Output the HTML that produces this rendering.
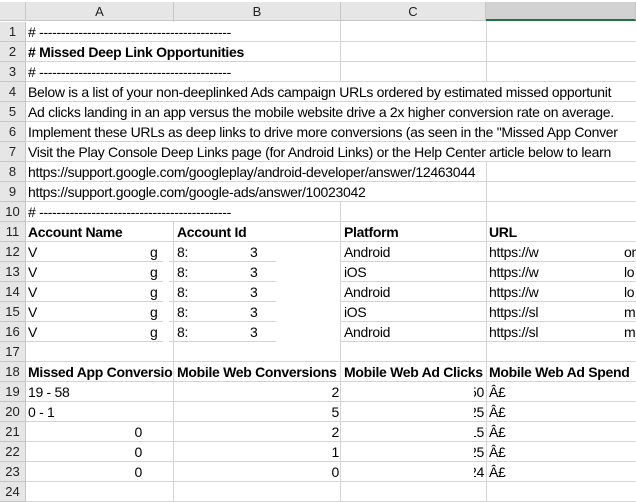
<!DOCTYPE html>
<html><head><style>
body{margin:0;width:636px;height:501px;overflow:hidden;background:#fff;font-family:"Liberation Sans",sans-serif;position:relative}
.h{position:absolute;top:2px;height:19px;background:#e6e6e6;border-right:1px solid #c6c6c6;border-bottom:1px solid #c6c6c6;box-sizing:border-box;text-align:center;font-size:13px;line-height:19px;color:#222}
.r{position:absolute;left:0;width:26px;height:20px;background:#e6e6e6;border-bottom:1px solid #c6c6c6;border-right:1px solid #c6c6c6;box-sizing:border-box;text-align:center;font-size:13px;line-height:20px;color:#222}
.hl{position:absolute;left:26px;right:0;height:1px;background:#d4d4d4}
.vl{position:absolute;top:21px;bottom:0;width:1px;background:#d4d4d4}
.t{position:absolute;font-size:14px;line-height:20px;color:#000;white-space:nowrap;letter-spacing:-0.3px}
.b{font-weight:bold}
.rt{text-align:right}
</style></head><body>
<div class="h" style="left:0;width:26px"></div>
<div class="h" style="left:26px;width:148px">A</div>
<div class="h" style="left:174px;width:167px">B</div>
<div class="h" style="left:341px;width:145px">C</div>
<div class="h" style="left:486px;width:150px;background:#d2d2d2;border-bottom:2px solid #217346"></div>
<div class="vl" style="left:173px"></div>
<div class="vl" style="left:340px"></div>
<div class="vl" style="left:486px"></div>
<div id="rows"></div>
<script>
var s='';for(var i=1;i<=24;i++){var y=22+(i-1)*20;s+='<div class="r" style="top:'+y+'px">'+i+'</div><div class="hl" style="top:'+(y+19)+'px"></div>';}
document.getElementById('rows').innerHTML=s;
</script>
<div class="t" style="left:27px;padding-left:1px;top:22px;background:#fff;width:238px;height:19px">#&nbsp;--------------------------------------------</div>
<div class="t b" style="left:27px;padding-left:1px;top:42px;background:#fff;width:238px;height:19px">#&nbsp;Missed Deep Link Opportunities</div>
<div class="t" style="left:27px;padding-left:1px;top:62px;background:#fff;width:238px;height:19px">#&nbsp;--------------------------------------------</div>
<div class="t" style="left:28px;top:82px;background:#fff;right:0;height:19px">Below is a list of your non-deeplinked Ads campaign URLs ordered by estimated missed opportunit</div>
<div class="t" style="left:28px;top:102px;background:#fff;right:0;height:19px">Ad clicks landing in an app versus the mobile website drive a 2x higher conversion rate on average.</div>
<div class="t" style="left:28px;top:122px;background:#fff;right:0;height:19px">Implement these URLs as deep links to drive more conversions (as seen in the "Missed App Conver</div>
<div class="t" style="left:28px;top:142px;background:#fff;right:0;height:19px">Visit the Play Console Deep Links page (for Android Links) or the Help Center article below to learn</div>
<div class="t" style="left:28px;top:162px;background:#fff;width:430px;height:19px">https://support.google.com/googleplay/android-developer/answer/12463044</div>
<div class="t" style="left:28px;top:182px;background:#fff;width:380px;height:19px">https://support.google.com/google-ads/answer/10023042</div>
<div class="t" style="left:27px;padding-left:1px;top:202px;background:#fff;width:238px;height:19px">#&nbsp;--------------------------------------------</div>
<div class="t b" style="left:28px;top:222px">Account Name</div>
<div class="t b" style="left:177px;top:222px">Account Id</div>
<div class="t b" style="left:344px;top:222px">Platform</div>
<div class="t b" style="left:489px;top:222px">URL</div>
<div id="d"></div>
<script>
var p=['Android','iOS','Android','iOS','Android'],u=['https://w','https://w','https://w','https://sl','https://sl'],e=['on','lo','lo','m','m'],h='';
for(var i=0;i<5;i++){var y=242+i*20;
h+='<div class="t" style="left:28px;top:'+y+'px">V</div><div class="t" style="left:150px;top:'+y+'px">g</div>';
h+='<div class="t" style="left:177px;top:'+y+'px">8:</div><div class="t" style="left:250px;top:'+y+'px">3</div>';
h+='<div style="position:absolute;left:163px;width:6px;top:'+(y+19)+'px;height:1px;background:#fff"></div>';
h+='<div style="position:absolute;left:276px;width:64px;top:'+(y+19)+'px;height:1px;background:#fff"></div>';
h+='<div class="t" style="left:344px;top:'+y+'px">'+p[i]+'</div><div class="t" style="left:489px;top:'+y+'px">'+u[i]+'</div><div class="t" style="left:624px;top:'+y+'px">'+e[i]+'</div>';}
var b=['2','5','2','1','0'],c=['50','25','15','25','24'],a=['19 - 58','0 - 1','0','0','0'];
for(var i=0;i<5;i++){var y=382+i*20;
h+=(i<2?'<div class="t" style="left:28px;top:'+y+'px">'+a[i]+'</div>':'<div class="t rt" style="right:494px;top:'+y+'px">0</div>');
h+='<div class="t rt" style="right:297px;top:'+y+'px">'+b[i]+'</div>';
h+='<div class="t rt" style="right:152px;top:'+y+'px;width:10px;overflow:hidden;direction:rtl">'+c[i]+'</div>';
h+='<div class="t" style="left:489px;top:'+y+'px">Â£</div>';}
document.getElementById('d').innerHTML=h;
</script>
<div class="t b" style="left:28px;top:362px;width:145px;overflow:hidden;background:#fff;height:19px">Missed App Conversions</div>
<div class="t b" style="left:177px;top:362px">Mobile Web Conversions</div>
<div class="t b" style="left:344px;top:362px">Mobile Web Ad Clicks</div>
<div class="t b" style="left:489px;top:362px">Mobile Web Ad Spend</div>
</body></html>
